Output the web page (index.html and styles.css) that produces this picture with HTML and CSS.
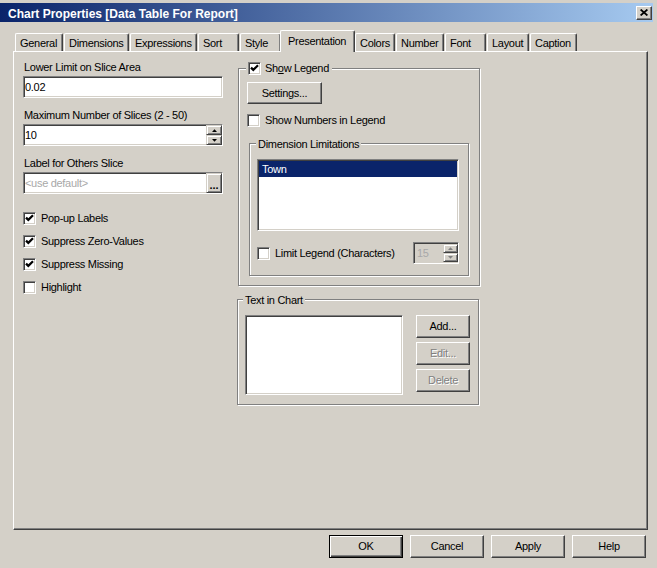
FILE: index.html
```html
<!DOCTYPE html>
<html lang="en">
<head>
<meta charset="utf-8">
<title>Chart Properties</title>
<link rel="stylesheet" href="styles.css">
</head>
<body>
<div class="window">
  <div class="titlebar">
    <span class="title">Chart Properties [Data Table For Report]</span>
    <span class="close-btn">
      <svg width="8" height="7" viewBox="0 0 8 7"><path d="M0.6 0.5 L7.4 6.5 M7.4 0.5 L0.6 6.5" stroke="#000" stroke-width="1.7" fill="none"/></svg>
    </span>
  </div>
  <div class="tabs">
    <div class="tab w-general">General</div>
    <div class="tab w-dimensions">Dimensions</div>
    <div class="tab w-expressions">Expressions</div>
    <div class="tab w-sort">Sort</div>
    <div class="tab w-style">Style</div>
    <div class="tab tab-active">Presentation</div>
    <div class="tab w-colors">Colors</div>
    <div class="tab w-number">Number</div>
    <div class="tab w-font">Font</div>
    <div class="tab w-layout">Layout</div>
    <div class="tab w-caption">Caption</div>
  </div>
  <div class="panel">
    <div class="col-left">
      <div class="label">Lower Limit on Slice Area</div>
      <div class="field"><span class="field-text">0.02</span></div>
      <div class="label">Maximum Number of Slices (2 - 50)</div>
      <div class="field">
        <span class="field-text">10</span>
        <div class="spin">
          <span class="spin-btn"><svg width="5" height="3" viewBox="0 0 5 3"><polygon points="0,3 5,3 2.5,0.2" fill="#000"/></svg></span>
          <span class="spin-btn"><svg width="5" height="3" viewBox="0 0 5 3"><polygon points="0,0 5,0 2.5,2.8" fill="#000"/></svg></span>
        </div>
      </div>
      <div class="label">Label for Others Slice</div>
      <div class="field">
        <span class="field-text muted">&lt;use default&gt;</span>
        <span class="dots-btn">...</span>
      </div>
      <div class="checks">
        <div class="check-row"><span class="cb"><svg width="9" height="9" viewBox="0 0 9 9"><polyline points="1,3.6 3.3,5.9 8,1.2" stroke="#000" stroke-width="2.2" fill="none"/></svg></span><span>Pop-up Labels</span></div>
        <div class="check-row"><span class="cb"><svg width="9" height="9" viewBox="0 0 9 9"><polyline points="1,3.6 3.3,5.9 8,1.2" stroke="#000" stroke-width="2.2" fill="none"/></svg></span><span>Suppress Zero-Values</span></div>
        <div class="check-row"><span class="cb"><svg width="9" height="9" viewBox="0 0 9 9"><polyline points="1,3.6 3.3,5.9 8,1.2" stroke="#000" stroke-width="2.2" fill="none"/></svg></span><span>Suppress Missing</span></div>
        <div class="check-row"><span class="cb"></span><span>Highlight</span></div>
      </div>
    </div>
    <div class="col-right">
      <div class="group legend-group">
        <div class="group-cap cap-legend"><span class="cb cb-tight"><svg width="9" height="9" viewBox="0 0 9 9"><polyline points="1,3.6 3.3,5.9 8,1.2" stroke="#000" stroke-width="2.2" fill="none"/></svg></span><span>Sh<u>o</u>w Legend</span></div>
        <div class="btn settings-btn">Settings...</div>
        <div class="check-row numbers-row"><span class="cb"></span><span>Show Numbers in Legend</span></div>
        <div class="group dim-group">
          <div class="group-cap cap-dim">Dimension Limitations</div>
          <div class="listbox dim-list"><div class="list-item selected">Town</div></div>
          <div class="limit-row">
            <div class="check-row"><span class="cb"></span><span>Limit Legend (Characters)</span></div>
            <div class="field spin-field">
              <span class="field-text muted">15</span>
              <div class="spin spin-inset">
                <span class="spin-btn"><svg width="5" height="3" viewBox="0 0 5 3"><polygon points="0,3 5,3 2.5,0.2" fill="#808080"/></svg></span>
                <span class="spin-btn"><svg width="5" height="3" viewBox="0 0 5 3"><polygon points="0,0 5,0 2.5,2.8" fill="#808080"/></svg></span>
              </div>
            </div>
          </div>
        </div>
      </div>
      <div class="group text-group">
        <div class="group-cap cap-text-chart">Text in Chart</div>
        <div class="text-body">
          <div class="listbox text-list"></div>
          <div class="btn-col">
            <div class="btn small-btn">Add...</div>
            <div class="btn small-btn disabled">Edit...</div>
            <div class="btn small-btn disabled">Delete</div>
          </div>
        </div>
      </div>
    </div>
  </div>
  <div class="footer">
    <div class="btn footer-btn default">OK</div>
    <div class="btn footer-btn">Cancel</div>
    <div class="btn footer-btn">Apply</div>
    <div class="btn footer-btn">Help</div>
  </div>
</div>
</body>
</html>
```

FILE: styles.css
```css
html, body {
  margin: 0;
  padding: 0;
  background: #d4d0c8;
}

body {
  font-family: "Liberation Sans", Arial, sans-serif;
  font-size: 11px;
  letter-spacing: -0.3px;
  color: #000;
}

.window {
  width: 657px;
  height: 568px;
  overflow: hidden;
  display: flex;
  flex-direction: column;
  background: #d4d0c8;
}

/* Title bar */
.titlebar {
  box-sizing: border-box;
  margin-top: 3px;
  width: 653px;
  height: 19px;
  flex: none;
  background: linear-gradient(to right, #0a246a, #a6caf0);
  display: flex;
  align-items: center;
  padding: 0 1px 0 8px;
}

.title {
  color: #fff;
  font-weight: bold;
  font-size: 12px;
  letter-spacing: 0;
  padding-top: 2px;
  white-space: nowrap;
}

.close-btn {
  box-sizing: border-box;
  margin-left: auto;
  width: 16px;
  height: 14px;
  background: #d4d0c8;
  border: 1px solid;
  border-color: #fff #404040 #404040 #fff;
  box-shadow: inset -1px -1px #808080;
  display: flex;
  align-items: center;
  justify-content: center;
  padding-bottom: 1px;
}

/* Tabs */
.tabs {
  position: relative;
  z-index: 1;
  display: flex;
  align-items: flex-end;
  height: 21px;
  flex: none;
  margin-top: 8px;
  padding-left: 15px;
}

.tab {
  box-sizing: border-box;
  height: 18px;
  border-top: 1px solid #fff;
  border-left: 1px solid #fff;
  border-right: 1px solid #404040;
  box-shadow: inset -1px 0 #808080;
  border-radius: 2px 2px 0 0;
  padding: 3px 0 0 4px;
  margin-right: 1px;
  line-height: 13px;
  white-space: nowrap;
  background: #d4d0c8;
}

.w-general { width: 48px; }
.w-dimensions { width: 65px; }
.w-expressions { width: 67px; }
.w-sort { width: 41px; }
.w-style { width: 41px; }
.w-colors { width: 40px; }
.w-number { width: 48px; }
.w-font { width: 41px; }
.w-layout { width: 42px; }
.w-caption { width: 47px; }

.tab-active {
  width: 75px;
  height: 22px;
  margin: 0 0 -1px -2px;
  padding: 4px 0 0 7px;
}

/* Panel */
.panel {
  box-sizing: border-box;
  flex: none;
  margin-left: 13px;
  width: 635px;
  height: 479px;
  border-top: 1px solid #fff;
  border-left: 1px solid #fff;
  border-right: 1px solid #404040;
  border-bottom: 1px solid #404040;
  box-shadow: inset -1px -1px #808080;
  display: flex;
  align-items: flex-start;
  padding: 9px 0 0 9px;
}

.col-left {
  width: 200px;
  display: flex;
  flex-direction: column;
}

.label {
  line-height: 13px;
  height: 13px;
  padding-left: 1px;
  white-space: nowrap;
  margin-top: 11px;
}

.label:first-child {
  margin-top: 0;
}

.field {
  box-sizing: border-box;
  height: 22px;
  margin-top: 2px;
  background: #fff;
  border: 1px solid;
  border-color: #808080 #fff #fff #808080;
  box-shadow: inset 1px 1px #404040, inset -1px -1px #d4d0c8;
  display: flex;
  align-items: center;
  padding-left: 1px;
}

.field-text {
  white-space: nowrap;
  line-height: 13px;
}

.muted {
  color: #a8a8a8;
}

.spin {
  margin-left: auto;
  align-self: stretch;
  width: 16px;
  display: flex;
  flex-direction: column;
}

.spin-btn {
  flex: 1;
  box-sizing: border-box;
  background: #d4d0c8;
  border: 1px solid;
  border-color: #d4d0c8 #404040 #404040 #d4d0c8;
  box-shadow: inset 1px 1px #fff, inset -1px -1px #808080;
  display: flex;
  align-items: center;
  justify-content: center;
}

.dots-btn {
  box-sizing: border-box;
  margin-left: auto;
  align-self: stretch;
  width: 16px;
  background: #d4d0c8;
  border: 1px solid;
  border-color: #d4d0c8 #404040 #404040 #d4d0c8;
  box-shadow: inset 1px 1px #fff, inset -1px -1px #808080;
  display: flex;
  align-items: flex-end;
  justify-content: center;
  font-weight: bold;
  line-height: 8px;
  letter-spacing: 0;
  padding-bottom: 3px;
}

.checks {
  margin-top: 18px;
  display: flex;
  flex-direction: column;
  gap: 10px;
}

.check-row {
  display: flex;
  align-items: center;
  height: 13px;
  line-height: 13px;
  white-space: nowrap;
}

.cb {
  box-sizing: border-box;
  flex: none;
  width: 13px;
  height: 13px;
  margin-right: 5px;
  background: #fff;
  border: 1px solid;
  border-color: #808080 #fff #fff #808080;
  box-shadow: inset 1px 1px #404040, inset -1px -1px #d4d0c8;
  display: flex;
  align-items: center;
  justify-content: center;
}

.cb-tight {
  margin-right: 4px;
}

/* Right column */
.col-right {
  margin-left: 15px;
  display: flex;
  flex-direction: column;
}

.group {
  box-sizing: border-box;
  border: 1px solid #808080;
  box-shadow: 1px 1px 0 #fff, inset 1px 1px 0 #fff;
}

.group-cap {
  display: flex;
  align-items: center;
  width: fit-content;
  height: 13px;
  line-height: 13px;
  background: #d4d0c8;
  padding: 0 2px;
  white-space: nowrap;
}

.legend-group {
  width: 242px;
  height: 218px;
  margin-top: 7px;
}

.cap-legend {
  margin: -7px 0 0 7px;
  padding: 0 3px 0 2px;
}

.btn {
  box-sizing: border-box;
  background: #d4d0c8;
  border: 1px solid;
  border-color: #fff #404040 #404040 #fff;
  box-shadow: inset -1px -1px #808080;
  display: flex;
  align-items: center;
  justify-content: center;
  white-space: nowrap;
  line-height: 13px;
}

.btn.disabled {
  color: #808080;
  text-shadow: 1px 1px 0 #fff;
}

.settings-btn {
  width: 75px;
  height: 22px;
  margin: 7px 0 0 8px;
}

.numbers-row {
  margin: 10px 0 0 8px;
}

.dim-group {
  width: 220px;
  height: 133px;
  margin: 16px 0 0 10px;
}

.cap-dim {
  margin: -6px 0 0 6px;
}

.listbox {
  box-sizing: border-box;
  background: #fff;
  border: 1px solid;
  border-color: #808080 #fff #fff #808080;
  box-shadow: inset 1px 1px #404040, inset -1px -1px #d4d0c8;
  padding: 1px;
}

.dim-list {
  width: 202px;
  height: 72px;
  margin: 8px 0 0 7px;
}

.list-item {
  height: 16px;
  line-height: 16px;
  padding-left: 3px;
}

.list-item.selected {
  background: #0a246a;
  color: #fff;
}

.limit-row {
  width: 202px;
  margin: 11px 0 0 7px;
  display: flex;
  align-items: center;
  justify-content: space-between;
}

.spin-field {
  width: 46px;
  margin-top: 0;
  background: #d4d0c8;
  padding-left: 3px;
}

.spin-inset {
  width: 15px;
  margin: 1px 0 1px auto;
}

.text-group {
  width: 242px;
  height: 106px;
  margin: 13px 0 0 -1px;
}

.cap-text-chart {
  margin: -6px 0 0 5px;
}

.text-body {
  display: flex;
  align-items: flex-start;
  margin: 8px 0 0 7px;
}

.text-list {
  width: 158px;
  height: 80px;
}

.btn-col {
  margin-left: 13px;
  display: flex;
  flex-direction: column;
  gap: 4px;
}

.small-btn {
  width: 54px;
  height: 23px;
}

/* Footer */
.footer {
  flex: none;
  margin-top: 5px;
  display: flex;
  justify-content: flex-end;
  gap: 7px;
  padding-right: 11px;
}

.footer-btn {
  width: 74px;
  height: 23px;
}

.footer-btn.default {
  border: 1px solid #000;
  box-shadow: inset 1px 1px #fff, inset -1px -1px #404040, inset -2px -2px #808080;
}
```
